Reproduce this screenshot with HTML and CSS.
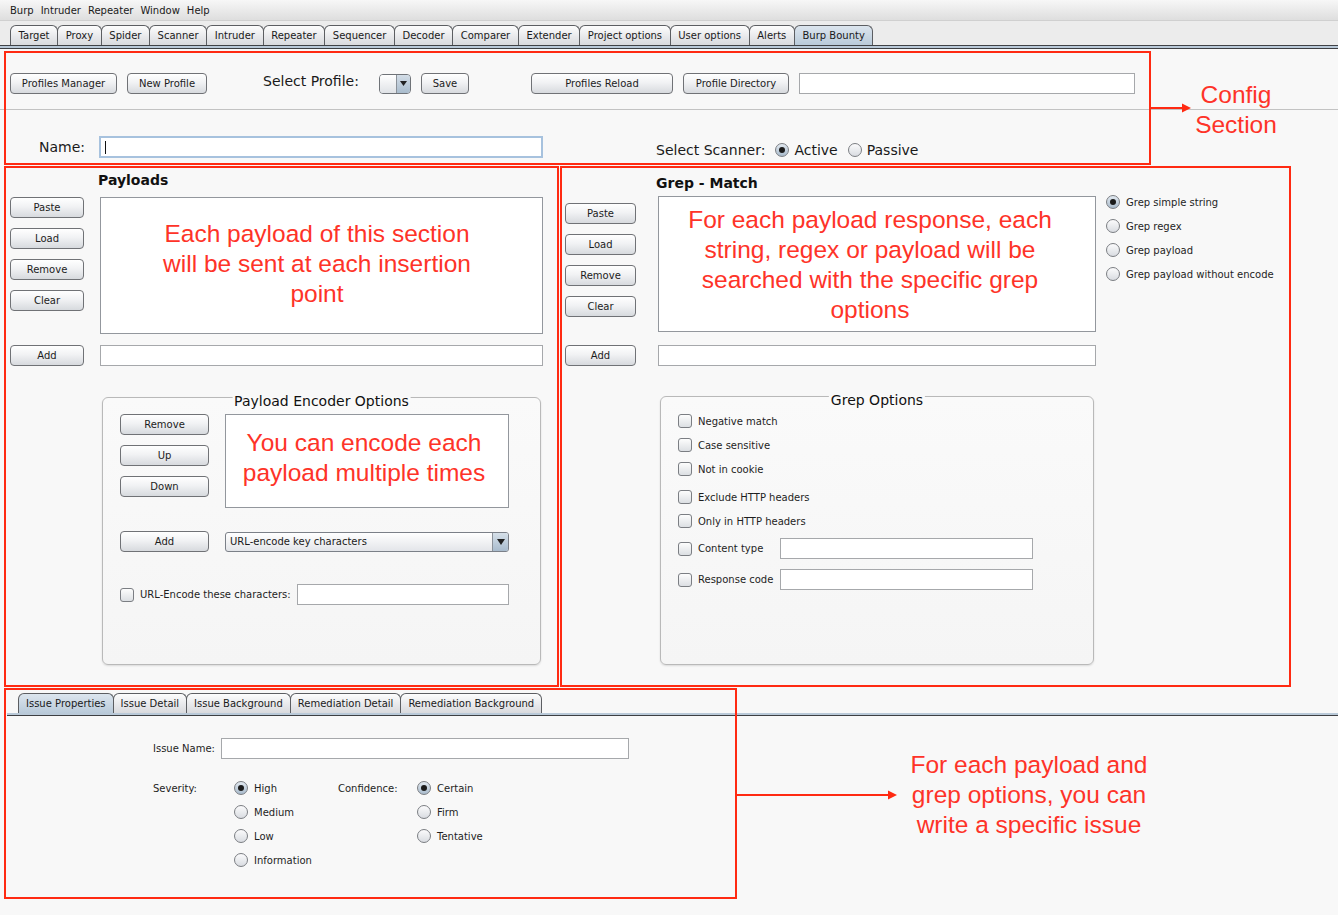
FILE: index.html
```html
<!DOCTYPE html>
<html>
<head>
<meta charset="utf-8">
<title>Burp Bounty</title>
<link rel="stylesheet" href="styles.css">
</head>
<body>
<div class="app">
  <div class="menubar">
    <span>Burp</span><span>Intruder</span><span>Repeater</span><span>Window</span><span>Help</span>
  </div>
  <div class="tabbar">
    <div class="tab main">Target</div>
    <div class="tab main">Proxy</div>
    <div class="tab main">Spider</div>
    <div class="tab main">Scanner</div>
    <div class="tab main">Intruder</div>
    <div class="tab main">Repeater</div>
    <div class="tab main">Sequencer</div>
    <div class="tab main">Decoder</div>
    <div class="tab main">Comparer</div>
    <div class="tab main">Extender</div>
    <div class="tab main">Project options</div>
    <div class="tab main">User options</div>
    <div class="tab main">Alerts</div>
    <div class="tab main active">Burp Bounty</div>
  </div>
  <div class="tabline"></div>

  <main class="content">
    <section class="config">
      <div class="cfg-row1">
        <div class="btn b-manager">Profiles Manager</div>
        <div class="btn b-new">New Profile</div>
        <span class="big-label sel-label">Select Profile:</span>
        <div class="mini-combo"><span class="mc-left"></span><span class="mc-arrow"><svg width="7" height="5" viewBox="0 0 7 5"><path d="M0 0H7L3.5 5Z" fill="#222"/></svg></span></div>
        <div class="btn b-save">Save</div>
        <div class="btn b-reload">Profiles Reload</div>
        <div class="btn b-dir">Profile Directory</div>
        <div class="field f-dir"></div>
      </div>
      <div class="sep"></div>
      <div class="cfg-row2">
        <span class="big-label name-label">Name:</span>
        <div class="field name-field"><span class="caret"></span></div>
        <div class="scanner">
          <span class="big-label">Select Scanner:</span>
          <span class="radio checked"></span><span class="big-label opt">Active</span>
          <span class="radio"></span><span class="big-label opt">Passive</span>
        </div>
      </div>
    </section>

    <div class="columns">
      <section class="payloads">
        <h2 class="sec-title pay-title">Payloads</h2>
        <div class="list-row">
          <div class="btn-col pay-btns">
            <div class="btn">Paste</div>
            <div class="btn">Load</div>
            <div class="btn">Remove</div>
            <div class="btn">Clear</div>
          </div>
          <div class="area pay-area"><p class="note">Each payload of this section<br>will be sent at each insertion<br>point</p></div>
        </div>
        <div class="add-row pay-add">
          <div class="btn">Add</div>
          <div class="field"></div>
        </div>

        <div class="group enc-group">
          <span class="group-title">Payload Encoder Options</span>
          <div class="enc-row">
            <div class="btn-col enc-btns">
              <div class="btn">Remove</div>
              <div class="btn">Up</div>
              <div class="btn">Down</div>
            </div>
            <div class="area enc-area"><p class="note">You can encode each<br>payload multiple times</p></div>
          </div>
          <div class="enc-add">
            <div class="btn">Add</div>
            <div class="combo"><span class="combo-text">URL-encode key characters</span><span class="combo-arrow"><svg width="8" height="6" viewBox="0 0 8 6"><path d="M0 0H8L4 6Z" fill="#222"/></svg></span></div>
          </div>
          <div class="enc-chars">
            <span class="check"></span>
            <span class="chk-label enc-label">URL-Encode these characters:</span>
            <div class="field"></div>
          </div>
        </div>
      </section>

      <section class="grep">
        <h2 class="sec-title grep-title">Grep - Match</h2>
        <div class="list-row">
          <div class="btn-col grep-btns">
            <div class="btn">Paste</div>
            <div class="btn">Load</div>
            <div class="btn">Remove</div>
            <div class="btn">Clear</div>
          </div>
          <div class="area grep-area"><p class="note">For each payload response, each<br>string, regex or payload will be<br>searched with the specific grep<br>options</p></div>
          <div class="grep-radios">
            <label class="ropt"><span class="radio checked"></span>Grep simple string</label>
            <label class="ropt"><span class="radio"></span>Grep regex</label>
            <label class="ropt"><span class="radio"></span>Grep payload</label>
            <label class="ropt"><span class="radio"></span>Grep payload without encode</label>
          </div>
        </div>
        <div class="add-row grep-add">
          <div class="btn">Add</div>
          <div class="field"></div>
        </div>

        <div class="group grep-group">
          <span class="group-title">Grep Options</span>
          <div class="gopt"><span class="check"></span><span class="chk-label">Negative match</span></div>
          <div class="gopt"><span class="check"></span><span class="chk-label">Case sensitive</span></div>
          <div class="gopt pre-gap"><span class="check"></span><span class="chk-label">Not in cookie</span></div>
          <div class="gopt"><span class="check"></span><span class="chk-label">Exclude HTTP headers</span></div>
          <div class="gopt"><span class="check"></span><span class="chk-label">Only in HTTP headers</span></div>
          <div class="gopt with-field"><span class="check"></span><span class="chk-label g-label">Content type</span><div class="field"></div></div>
          <div class="gopt with-field"><span class="check"></span><span class="chk-label g-label">Response code</span><div class="field"></div></div>
        </div>
      </section>
    </div>

    <section class="issue">
      <div class="subtabs">
        <div class="tab active">Issue Properties</div>
        <div class="tab">Issue Detail</div>
        <div class="tab">Issue Background</div>
        <div class="tab">Remediation Detail</div>
        <div class="tab">Remediation Background</div>
      </div>
      <div class="subtabline"></div>
      <div class="issue-name">
        <span class="iname-label">Issue Name:</span>
        <div class="field"></div>
      </div>
      <div class="levels">
        <span class="lvl-label sev-label">Severity:</span>
        <div class="lvl-col sev-col">
          <label class="ropt"><span class="radio checked"></span>High</label>
          <label class="ropt"><span class="radio"></span>Medium</label>
          <label class="ropt"><span class="radio"></span>Low</label>
          <label class="ropt"><span class="radio"></span>Information</label>
        </div>
        <span class="lvl-label conf-label">Confidence:</span>
        <div class="lvl-col">
          <label class="ropt"><span class="radio checked"></span>Certain</label>
          <label class="ropt"><span class="radio"></span>Firm</label>
          <label class="ropt"><span class="radio"></span>Tentative</label>
        </div>
      </div>
    </section>
  </main>

  <!-- annotation layer drawn over the screenshot -->
  <div class="frame fr-config"></div>
  <div class="frame fr-payloads"></div>
  <div class="frame fr-grep"></div>
  <div class="frame fr-issue"></div>
  <svg class="arrow ar-config" width="42" height="12" viewBox="0 0 42 12"><path d="M0 6H34" stroke="#ff2a12" stroke-width="2"/><path d="M32 1.5L41 6L32 10.5Z" fill="#ff2a12"/></svg>
  <svg class="arrow ar-issue" width="162" height="12" viewBox="0 0 162 12"><path d="M0 6H154" stroke="#ff2a12" stroke-width="2"/><path d="M152 1.5L161 6L152 10.5Z" fill="#ff2a12"/></svg>
  <div class="callout co-config">Config<br>Section</div>
  <div class="callout co-issue">For each payload and<br>grep options, you can<br>write a specific issue</div>
</div>
</body>
</html>
```

FILE: styles.css
```css
* { box-sizing: border-box; }

body {
  margin: 0;
  background: #f8f8f8;
  font-family: "DejaVu Sans", "Noto Sans", sans-serif;
  font-size: 10px;
  color: #1e1e1e;
}

.app {
  position: relative;
  width: 1338px;
  height: 915px;
  overflow: hidden;
  background: #f8f8f8;
}

/* menu bar */
.menubar {
  height: 21px;
  display: flex;
  align-items: center;
  gap: 7px;
  padding-left: 10px;
  background: linear-gradient(#f7f7f7, #dedede);
  border-bottom: 1px solid #d0d0d0;
  color: #1a1a1a;
}

/* main tabs */
.tabbar {
  height: 24px;
  display: flex;
  align-items: flex-end;
  padding-left: 10px;
  background: #ececec;
}

.tab {
  height: 20px;
  padding: 0 7px;
  display: flex;
  align-items: center;
  border: 1px solid #5c5e62;
  border-bottom: none;
  border-radius: 6px 6px 0 0;
  margin-right: -1px;
  background: linear-gradient(#fdfdfd, #e6e7ea 60%, #d9dadd);
  color: #1a1a1a;
  white-space: nowrap;
}

.tab.main { padding: 0 7.6px; }

.tab.active {
  background: linear-gradient(#dce5ee, #b9cad9);
  position: relative;
  z-index: 1;
}

.tabline {
  height: 4px;
  background: #b9c9d8;
  border-top: 1px solid #404246;
  border-bottom: 1px solid #3d3f42;
}

/* buttons & fields */
.btn {
  height: 21px;
  display: flex;
  align-items: center;
  justify-content: center;
  border: 1px solid #707276;
  border-radius: 4px;
  background: linear-gradient(#ffffff, #f1f2f4 45%, #d7dade);
  color: #1c1c1c;
  white-space: nowrap;
  flex: none;
}

.field {
  height: 21px;
  border: 1px solid #a6a8ab;
  background: #fff;
  flex: none;
}

.area {
  border: 1px solid #93979d;
  background: #fff;
  flex: none;
}

.note {
  margin: 0;
  font-family: "Liberation Sans", Arial, sans-serif;
  font-size: 24.5px;
  line-height: 30px;
  color: #fe3328;
  text-align: center;
  white-space: nowrap;
}

.big-label {
  font-size: 14px;
  color: #1a1a1a;
  white-space: nowrap;
}

/* radio & checkbox */
.radio {
  width: 14px;
  height: 14px;
  border-radius: 50%;
  border: 1px solid #7b7e83;
  background: linear-gradient(#fbfbfc, #d9dce1);
  flex: none;
  display: inline-flex;
  align-items: center;
  justify-content: center;
}

.radio.checked {
  background: linear-gradient(#e2e9f0, #a9bbcc);
}

.radio.checked::after {
  content: "";
  width: 6px;
  height: 6px;
  border-radius: 50%;
  background: #1b1b1b;
}

.check {
  width: 14px;
  height: 14px;
  border-radius: 3px;
  border: 1px solid #7b7e83;
  background: linear-gradient(#fdfdfd, #dcdfe3);
  flex: none;
}

.ropt {
  display: flex;
  align-items: center;
  gap: 6px;
  height: 14px;
  white-space: nowrap;
}

/* config section */
.config {
  height: 109px;
  padding-top: 24px;
}

.cfg-row1 {
  padding-left: 10px;
  display: flex;
  align-items: center;
  height: 21px;
}

.b-manager { width: 107px; }
.b-new { width: 80px; margin-left: 10px; }
.sel-label { width: 116px; margin-left: 56px; align-self: flex-start; line-height: 17px; }
.b-save { width: 48px; margin-left: 10px; }
.b-reload { width: 142px; margin-left: 62px; }
.b-dir { width: 106px; margin-left: 10px; }
.f-dir { width: 336px; margin-left: 10px; }

.mini-combo {
  width: 32px;
  height: 20px;
  display: flex;
  border: 1px solid #6f7378;
  border-radius: 4px;
  overflow: hidden;
}

.mc-left {
  flex: 1;
  background: linear-gradient(#ffffff, #dfe2e6);
  border-right: 1px solid #8a9199;
}

.mc-arrow {
  width: 13px;
  display: flex;
  align-items: center;
  justify-content: center;
  background: linear-gradient(#d3dde7, #a9bccd);
}

.sep {
  margin-top: 15px;
  height: 1px;
  background: #c3c3c3;
}

.cfg-row2 {
  margin-top: 26px;
  display: flex;
  align-items: center;
  height: 22px;
}

.name-label { margin-left: 39px; width: 60px; margin-top: -1px; }

.name-field {
  width: 444px;
  height: 22px;
  border: 2px solid #a7c2de;
  display: flex;
  align-items: center;
  padding-left: 4px;
}

.caret {
  width: 1px;
  height: 13px;
  background: #111;
}

.scanner {
  margin-left: 113px;
  margin-top: 6px;
  display: flex;
  align-items: center;
}

.scanner .radio { margin-left: 10px; margin-right: 5px; }

/* columns */
.columns {
  display: flex;
  height: 507px;
}

.payloads {
  width: 561px;
  padding-left: 10px;
  flex: none;
}

.grep {
  padding-left: 4px;
  flex: none;
}

.sec-title {
  margin: 0;
  font-size: 14px;
  line-height: 17px;
  font-weight: bold;
  color: #111;
}

.pay-title { margin: 14px 0 0 88px; }
.grep-title { margin: 17px 0 0 91px; }

.list-row {
  display: flex;
  align-items: flex-start;
}

.btn-col {
  display: flex;
  flex-direction: column;
  gap: 10px;
}

.payloads .list-row { margin-top: 8px; }
.pay-btns .btn { width: 74px; }
.pay-area { width: 443px; height: 137px; margin-left: 16px; padding: 21px 9px 0 0; }

.add-row {
  display: flex;
  align-items: center;
}

.pay-add { margin-top: 11px; }
.pay-add .btn { width: 74px; }
.pay-add .field { width: 443px; margin-left: 16px; }

.grep .list-row { margin-top: 4px; }
.grep-btns { padding-top: 7px; }
.grep-btns .btn { width: 71px; }
.grep-area { width: 438px; height: 136px; margin-left: 22px; padding: 8px 14px 0 0; }

.grep-radios {
  margin-left: 10px;
  margin-top: -1px;
  display: flex;
  flex-direction: column;
  gap: 10px;
}

.grep-add { margin-top: 13px; }
.grep-add .btn { width: 71px; }
.grep-add .field { width: 438px; margin-left: 22px; }

/* group boxes */
.group {
  position: relative;
  border: 1px solid #b9b9b9;
  border-radius: 6px;
  background: linear-gradient(#fafafa, #f5f5f5);
  box-shadow: 0 1px 2px rgba(0, 0, 0, 0.12);
}

.group-title {
  position: absolute;
  top: -5px;
  left: 50%;
  transform: translateX(-50%);
  padding: 0 2px;
  font-size: 14px;
  line-height: 16px;
  background: linear-gradient(#f8f8f8 0 4px, #fafafa 4px);
  color: #111;
  white-space: nowrap;
}

.enc-group {
  margin: 31px 0 0 92px;
  width: 439px;
  height: 268px;
  padding: 16px 0 0 17px;
}

.enc-row { display: flex; align-items: flex-start; }
.enc-btns .btn { width: 89px; }
.enc-area { width: 284px; height: 94px; margin-left: 16px; padding: 13px 6px 0 0; }

.enc-add {
  margin-top: 23px;
  display: flex;
  align-items: center;
}

.enc-add .btn { width: 89px; }

.combo {
  margin-left: 16px;
  width: 284px;
  height: 20px;
  display: flex;
  border: 1px solid #7b8088;
  border-radius: 3px;
  overflow: hidden;
  background: linear-gradient(#ffffff, #e3e5e9);
}

.combo-text {
  flex: 1;
  padding-left: 4px;
  display: flex;
  align-items: center;
  color: #1a1a1a;
}

.combo-arrow {
  width: 16px;
  display: flex;
  align-items: center;
  justify-content: center;
  border-left: 1px solid #8a9199;
  background: linear-gradient(#d6e0e9, #a8bbcd);
}

.enc-chars {
  margin-top: 32px;
  display: flex;
  align-items: center;
}

.chk-label { margin-left: 6px; white-space: nowrap; }
.enc-label { width: 157px; }
.enc-chars .field { width: 212px; }

.grep-group {
  margin: 30px 0 0 95px;
  width: 434px;
  height: 269px;
  padding: 17px 0 0 17px;
}

.gopt {
  display: flex;
  align-items: center;
  height: 14px;
  margin-bottom: 10px;
}

.gopt.pre-gap { margin-bottom: 14px; }
.gopt.with-field { height: 21px; }
.g-label { width: 82px; }
.gopt .field { width: 253px; }

/* issue section */
.issue { padding-top: 28px; }

.subtabs {
  display: flex;
  padding-left: 18px;
  height: 20px;
  align-items: flex-end;
}

.subtabline {
  margin-left: 7px;
  height: 3px;
  background: #b9c9d8;
  border-bottom: 1px solid #3d3f42;
}

.issue-name {
  margin-top: 22px;
  display: flex;
  align-items: center;
  padding-left: 153px;
}

.iname-label { width: 68px; }
.issue-name .field { width: 408px; }

.levels {
  margin-top: 22px;
  display: flex;
  align-items: flex-start;
  padding-left: 153px;
}

.lvl-label { height: 14px; display: flex; align-items: center; }
.sev-label { width: 81px; }
.conf-label { width: 79px; }

.lvl-col {
  display: flex;
  flex-direction: column;
  gap: 10px;
}

.sev-col { width: 104px; }

/* annotation layer (drawn over the UI) */
.frame {
  position: absolute;
  border: 2px solid #ff2a12;
}

.fr-config { left: 4px; top: 51px; width: 1147px; height: 114px; }
.fr-payloads { left: 4px; top: 166px; width: 555px; height: 521px; }
.fr-grep { left: 560px; top: 166px; width: 731px; height: 521px; }
.fr-issue { left: 4px; top: 688px; width: 733px; height: 211px; }

.arrow { position: absolute; }
.ar-config { left: 1150px; top: 102px; }
.ar-issue { left: 736px; top: 789px; }

.callout {
  position: absolute;
  font-family: "Liberation Sans", Arial, sans-serif;
  font-size: 24.5px;
  line-height: 30px;
  color: #fe3328;
  text-align: center;
  white-space: nowrap;
}

.co-config { left: 1176px; top: 80px; width: 120px; }
.co-issue { left: 889px; top: 750px; width: 280px; }
```
